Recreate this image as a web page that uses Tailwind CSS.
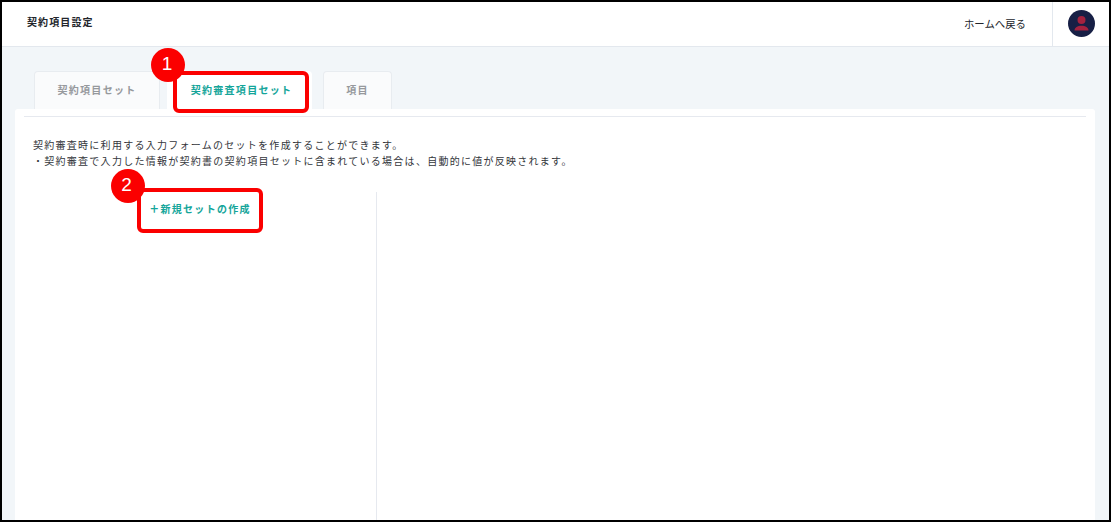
<!DOCTYPE html>
<html lang="ja">

<head>
    <meta charset="UTF-8">
    <title>契約項目設定</title>
    <script src="https://cdn.jsdelivr.net/npm/@tailwindcss/browser@4"></script>
</head>

<body class="bg-black font-['Noto_Sans_CJK_JP',sans-serif]">
    <div class="relative w-[1111px] h-[522px] overflow-hidden border-2 border-black bg-[#f2f6f9]">
        <header class="flex items-center h-[45px] bg-white border-b border-[#e3e8ee]">
            <h1 class="ml-[25px] text-[10px] font-bold text-[#22252b] leading-none tracking-[1.1px] -mt-[4px]">契約項目設定</h1>
            <a class="ml-auto mr-[26px] text-[10.4px] text-[#22252b] leading-none">ホームへ戻る</a>
            <div class="flex items-center justify-center w-[57px] h-full border-l border-[#e3e8ee] pl-[1px]">
                <svg class="w-[27px] h-[27px] -mt-[1px]" viewBox="0 0 27 27">
                    <circle cx="13.5" cy="13.5" r="13.5" fill="#171f45" />
                    <circle cx="13.5" cy="10" r="4" fill="#a3223f" />
                    <path d="M6.5 20.5c0-3 3-4.8 7-4.8s7 1.8 7 4.8z" fill="#a3223f" />
                </svg>
            </div>
        </header>

        <nav class="flex items-end h-[62px] pl-[32px]">
            <div class="flex items-center justify-center w-[126px] h-[38px] pb-[2px] bg-[#fafbfc] border border-b-0 border-[#e8ecf0] rounded-t-[4px] text-[10px] font-bold text-[#96999d] tracking-[1.3px]">契約項目セット</div>
            <div class="flex items-center justify-center w-[145px] h-[38px] pb-[2px] pl-[4px] ml-[7px] bg-white rounded-t-[4px] text-[10px] font-bold text-[#14a59a] tracking-[1.3px]">契約審査項目セット</div>
            <div class="flex items-center justify-center w-[69px] h-[38px] pb-[2px] ml-[11px] bg-[#fafbfc] border border-b-0 border-[#e8ecf0] rounded-t-[4px] text-[10px] font-bold text-[#96999d] tracking-[1.3px]">項目</div>
        </nav>

        <main class="ml-[13px] w-[1080px] h-[412px] bg-white rounded-t-[3px] pt-[7px] px-[9px]">
            <div class="border-t border-[#e6e9ef]"></div>
            <div class="pl-[9px] pt-[20px] text-[10px] leading-[16px] text-[#33363b] tracking-[1.27px]">
                <p>契約審査時に利用する入力フォームのセットを作成することができます。</p>
                <p>・契約審査で入力した情報が契約書の契約項目セットに含まれている場合は、自動的に値が反映されます。</p>
            </div>
            <div class="flex h-[330px] mt-[23px] -ml-[9px]">
                <div class="flex justify-center w-[362px] border-r border-[#e6e9ef]">
                    <button class="h-[34px] ml-[9px] -mt-[1px] text-[10px] font-bold text-[#14a59a] tracking-[1.3px]"><span class="font-black">＋</span>新規セットの作成</button>
                </div>
            </div>
        </main>

        <!-- annotations -->
        <div class="absolute left-[171px] top-[69px] w-[136px] h-[42px] border-[4px] border-[#fb0000] rounded-[6px]"></div>
        <div class="absolute left-[149px] top-[46px] flex items-center justify-center w-[34px] h-[34px] pr-[2px] pb-[4px] rounded-full bg-[#fb0000] text-white text-[19px] leading-none font-['Liberation_Sans',sans-serif]">1</div>
        <div class="absolute left-[135px] top-[186px] w-[126px] h-[45px] border-[4px] border-[#fb0000] rounded-[6px]"></div>
        <div class="absolute left-[109px] top-[167px] flex items-center justify-center w-[34px] h-[34px] pr-[3px] pb-[4px] rounded-full bg-[#fb0000] text-white text-[19px] leading-none font-['Liberation_Sans',sans-serif]">2</div>
    </div>
</body>

</html>
